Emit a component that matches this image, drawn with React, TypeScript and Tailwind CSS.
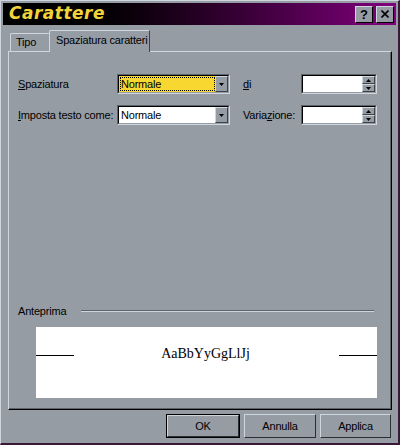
import React from "react";

const FONT = { fontFamily: '"Liberation Sans", Arial, sans-serif' };

function Field({ children, yellow, w, arrow }: { children?: React.ReactNode; yellow?: boolean; w: string; arrow: "combo" | "spin" }) {
  return (
    <div className={`${w} shrink-0 h-[20px] border border-t-[#5c636b] border-l-[#5c636b] border-b-[#cfd6dd] border-r-[#cfd6dd] flex`}>
      <div className={`flex-1 flex border border-t-black border-l-black border-b-[#959ca4] border-r-[#959ca4] ${yellow ? "bg-[#f8d830]" : "bg-white"}`}>
        <div className="flex-1 flex items-center pl-[1px] py-[1px]">
          <div className={`h-full w-full flex items-center px-[1px] text-[11px] text-black whitespace-nowrap ${yellow ? "outline-1 outline-dotted outline-black -outline-offset-1" : ""}`}>
            {children}
          </div>
        </div>
        {arrow === "combo" ? (
          <div className="w-[13px] h-full bg-[#959ca4] border border-t-[#cfd6dd] border-l-[#cfd6dd] border-b-[#3c4248] border-r-[#3c4248] flex items-center justify-center">
            <svg width="5" height="3" viewBox="0 0 5 3"><path d="M0 0h5L2.5 3z" fill="#000" /></svg>
          </div>
        ) : (
          <div className="w-[13px] h-full flex flex-col">
            <div className="flex-1 bg-[#959ca4] border border-t-[#cfd6dd] border-l-[#cfd6dd] border-b-[#3c4248] border-r-[#3c4248] flex items-center justify-center">
              <svg width="5" height="3" viewBox="0 0 5 3"><path d="M0 3h5L2.5 0z" fill="#000" /></svg>
            </div>
            <div className="flex-1 bg-[#959ca4] border border-t-[#cfd6dd] border-l-[#cfd6dd] border-b-[#3c4248] border-r-[#3c4248] flex items-center justify-center">
              <svg width="5" height="3" viewBox="0 0 5 3"><path d="M0 0h5L2.5 3z" fill="#000" /></svg>
            </div>
          </div>
        )}
      </div>
    </div>
  );
}

function Btn({ label, def, w }: { label: string; def?: boolean; w: string }) {
  return (
    <div className={`${w} h-[24px] ${def ? "border border-black" : ""}`}>
      <div className="w-full h-full bg-[#959ca4] border border-t-[#cfd6dd] border-l-[#cfd6dd] border-b-[#2a2f34] border-r-[#2a2f34] flex items-center justify-center text-[11px] text-black">
        {label}
      </div>
    </div>
  );
}

export default function App() {
  return (
    <div style={FONT} className="w-[400px] h-[445px] bg-[#959ca4] border-l border-t border-[#cfd6dd] border-r-2 border-b-2 border-r-[#3a1838] border-b-[#3a1838] flex flex-col select-none">
      <div className="mx-[2px] mt-[2px] h-[22px] bg-gradient-to-r from-black from-10% to-[#82007e] flex items-center justify-between pl-[6px] pr-[2px]">
        <span className="text-[#f2d43a] text-[17px] font-bold italic tracking-[0.5px]" style={{ fontFamily: '"DejaVu Sans", "Liberation Sans", sans-serif' }}>Carattere</span>
        <div className="flex gap-[3px]">
          <div className="w-[18px] h-[17px] bg-[#959ca4] border border-t-[#cfd6dd] border-l-[#cfd6dd] border-b-black border-r-black flex items-center justify-center text-[13px] font-bold leading-none text-black">?</div>
          <div className="w-[18px] h-[17px] bg-[#959ca4] border border-t-[#cfd6dd] border-l-[#cfd6dd] border-b-black border-r-black flex items-center justify-center">
            <svg width="8" height="8" viewBox="0 0 8 8"><path d="M0.5 0.5l7 7M7.5 0.5l-7 7" stroke="#000" strokeWidth="1.6" /></svg>
          </div>
        </div>
      </div>

      <div className="flex-1 flex flex-col pl-[7px] pr-[6px] pt-[4px] text-[11px] tracking-[-0.2px]">
        <div className="flex items-end h-[22px] pl-[2px]">
          <div className="w-[40px] h-[18px] border border-b-0 border-t-[#cfd6dd] border-l-[#cfd6dd] border-r-[#3c4248] rounded-tl-[2px] rounded-tr-[2px] flex items-center pl-[5px] text-black whitespace-nowrap">
            Tipo
          </div>
          <div className="w-[101px] h-[22px] -ml-[1px] border border-b-0 border-t-[#cfd6dd] border-l-[#cfd6dd] border-r-[#3c4248] border-r-dotted rounded-tl-[2px] flex items-center pl-[6px] pb-[2px] text-black whitespace-nowrap relative top-[1px] bg-[#959ca4]">
            Spaziatura caratteri
          </div>
        </div>
        <div className="h-[359px] border border-t-[#cfd6dd] border-l-[#cfd6dd] border-b-black border-r-black">
          <div className="h-full border-r border-b border-r-[#5c636b] border-b-[#5c636b] flex flex-col pl-[9px] pr-[12px] pt-[22px]">
            <div className="flex items-center h-[20px] text-black whitespace-nowrap">
              <span className="w-[99px] shrink-0"><u>S</u>paziatura</span>
              <Field w="w-[113px]" yellow arrow="combo">Normale</Field>
              <span className="w-[71px] shrink-0 pl-[13px]"><u>d</u>i</span>
              <Field w="w-[76px]" arrow="spin" />
            </div>
            <div className="flex items-center h-[20px] mt-[11px] text-black whitespace-nowrap">
              <span className="w-[99px] shrink-0"><u>I</u>mposta testo come:</span>
              <Field w="w-[113px]" arrow="combo">Normale</Field>
              <span className="w-[71px] shrink-0 pl-[13px]">Varia<u>z</u>ione:</span>
              <Field w="w-[76px]" arrow="spin" />
            </div>

            <div className="mt-[178px] flex items-center text-black">
              <span className="w-[63px] shrink-0">Anteprima</span>
              <div className="flex-1 mr-[4px] border-t border-t-[#5c636b] border-b border-b-[#cfd6dd]" />
            </div>
            <div className="mt-[7px] ml-[18px] mr-[1px] h-[71px] bg-white flex items-start pt-[18px]">
              <div className="w-[38px] h-[1px] bg-black mt-[10px]" />
              <div className="flex-1 text-center text-[14px] leading-[17px] text-black -ml-[2px] tracking-normal" style={{ fontFamily: '"Liberation Serif", "Times New Roman", serif' }}>AaBbYyGgLlJj</div>
              <div className="w-[38px] h-[1px] bg-black mt-[10px]" />
            </div>
          </div>
        </div>
        <div className="flex justify-end gap-[4px] mt-[4px] pr-[1px]">
          <Btn label="OK" def w="w-[74px]" />
          <Btn label="Annulla" w="w-[72px]" />
          <Btn label="Applica" w="w-[71px]" />
        </div>
      </div>
    </div>
  );
}
